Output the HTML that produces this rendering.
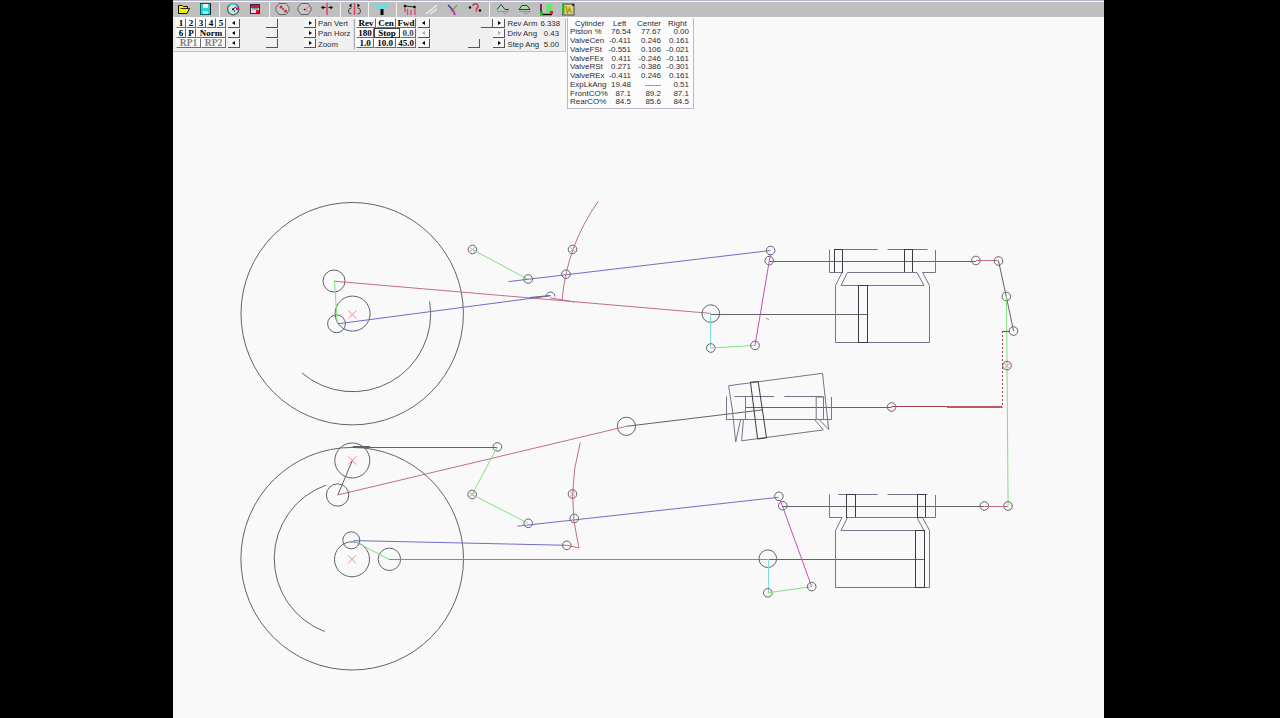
<!DOCTYPE html>
<html><head><meta charset="utf-8">
<style>
*{margin:0;padding:0;box-sizing:border-box}
html,body{width:1280px;height:718px;overflow:hidden;background:#000}
body{position:relative;font-family:"Liberation Sans",sans-serif}
#win{position:absolute;left:173px;top:0;width:931px;height:718px;background:#f9f9fa}
#tb{position:absolute;left:173px;top:0;width:931px;height:18px;background:#fafaf0}
#tb0{position:absolute;left:173px;top:0;width:931px;height:1px;background:#b4b4cc}
#tbg{position:absolute;left:173px;top:2px;width:931px;height:15px;background:#bfbfc0}
.sep{position:absolute;top:2px;width:1px;height:15px;background:#f4f4f0}
.ic{position:absolute;top:2px;width:16px;height:15px}
.btn{position:absolute;height:10px;font-family:"Liberation Serif",serif;font-weight:bold;font-size:9px;line-height:9px;text-align:center;color:#000;background:#fbfbfb;border-top:1px solid #fff;border-left:1px solid #fff;border-right:1px solid #6a6a6a;border-bottom:1px solid #6a6a6a}
.btn.dis{color:#808080;font-size:9.5px}
.arr{position:absolute;width:12px;height:9px;border-right:1px solid #555;border-bottom:1px solid #555;background:#f6f6f6}
.arr:after{content:"";position:absolute;top:2px;left:4px;width:0;height:0;border-top:2px solid transparent;border-bottom:2px solid transparent}
.arr.l:after{border-right:3px solid #000}
.arr.r:after{border-left:3px solid #000;left:5px}
.arr.dis:after{border-left-color:#aaa;border-right-color:#aaa}
.thumb{position:absolute;width:12px;height:9px;border-right:1px solid #555;border-bottom:1px solid #555;background:#f0f0f0}
.lbl{position:absolute;font-size:7.8px;line-height:9px;color:#2c2c30;white-space:nowrap}
#tbl{position:absolute;left:567px;top:18px;width:127px;height:91px;background:#fcfcfc;border-left:1px solid #b8b8c8;border-right:1px solid #b8b8c8;border-bottom:1px solid #b8b8c8}
.tr{position:absolute;left:0;width:125px;height:9px;font-size:8px;line-height:9px;color:#2c2c34;white-space:nowrap}
.tr span{position:absolute;top:0}
svg{position:absolute;left:0;top:0}
.d{fill:none;stroke:#62626e;stroke-width:1}
.dk{fill:none;stroke:#3c3c44;stroke-width:1}
.r{fill:none;stroke:#c07080;stroke-width:1}
.rd{fill:none;stroke:#a04050;stroke-width:1}
.rx{fill:none;stroke:#e890a0;stroke-width:1}
.b{fill:none;stroke:#6e6ec8;stroke-width:1}
.g{fill:none;stroke:#80e080;stroke-width:1}
.c{fill:none;stroke:#80e0e0;stroke-width:1}
.cy{fill:none;stroke:#74748a;stroke-width:1}
.rt{fill:none;stroke:#c05868;stroke-width:2}
.m{fill:none;stroke:#c050c0;stroke-width:1}
</style></head><body>
<div id="win"></div>
<div id="tb"></div>
<div id="tb0"></div>
<div id="tbg"></div>
<div class="sep" style="left:219px"></div>
<div class="sep" style="left:269px"></div>
<div class="sep" style="left:340px"></div>
<div class="sep" style="left:368px"></div>
<div class="sep" style="left:396px"></div>
<div class="sep" style="left:489px"></div>

<svg width="1280" height="18" viewBox="0 0 1280 18" style="position:absolute;left:0;top:0">
<!-- folder -->
<path d="M178.5,5.5 h4 l1,1 h4 v2 h2 l-2.5,5 h-8.5 z" fill="#f0f000" stroke="#101000" stroke-width="1"/>
<path d="M180.5,8.5 h9" stroke="#303000" stroke-width="1"/>
<!-- floppy -->
<rect x="200.5" y="3.5" width="10" height="11" fill="#20d8d8" stroke="#106060"/>
<rect x="203" y="4" width="5" height="4" fill="#f0f0f0"/>
<rect x="203" y="11" width="5" height="3" fill="#a0f0f0"/>
<line x1="210.5" y1="4" x2="210.5" y2="14" stroke="#000"/>
<!-- circle icon -->
<circle cx="233.2" cy="9.2" r="5.6" fill="#c8e8e0" stroke="#406058" stroke-width="1.2"/>
<path d="M230,5 a5,5 0 0 1 6,0" stroke="#40d0b0" fill="none" stroke-width="1.5"/>
<circle cx="233" cy="9.3" r="1" fill="#000"/>
<path d="M233,9.3 l3,-2.5" stroke="#302020"/>
<rect x="236" y="7.5" width="3" height="2.5" fill="#d010a0"/>
<circle cx="234.5" cy="11" r="0.8" fill="#104010"/>
<!-- printer/red floppy -->
<rect x="250.5" y="4.5" width="9" height="9" fill="#f0d8e8" stroke="#402838"/>
<rect x="251" y="5" width="8" height="3" fill="#c02040"/>
<rect x="252" y="8" width="6" height="1.5" fill="#60a0b0"/>
<rect x="256" y="10" width="3" height="3" fill="#e01030"/>
<!-- octagon with red dots -->
<path d="M279,3.5 h7 l3,4 v3 l-3,4 h-7 l-3,-4 v-3 z" fill="#c8c8c0" stroke="#606068"/>
<circle cx="281" cy="7" r="1.5" fill="#e02040"/>
<circle cx="285.5" cy="11" r="1.5" fill="#e02040"/>
<circle cx="283" cy="9" r="0.8" fill="#000"/>
<!-- octagon with lines -->
<path d="M301,3.5 h7 l3,4 v3 l-3,4 h-7 l-3,-4 v-3 z" fill="#c8c8c0" stroke="#606068"/>
<path d="M304.5,9.5 l5,-3 M304.5,9.5 l5,3" stroke="#e070a0"/>
<circle cx="304.5" cy="9.5" r="0.8" fill="#000"/>
<!-- red vertical with arrows -->
<line x1="327" y1="3" x2="327" y2="15" stroke="#e04060" stroke-width="1.5"/>
<path d="M321,7.5 l2.5,-2 v4 z M333,7.5 l-2.5,-2 v4 z" fill="#000"/>
<line x1="322" y1="7.5" x2="325.5" y2="7.5" stroke="#000"/><line x1="328.5" y1="7.5" x2="332" y2="7.5" stroke="#000"/>
<!-- icon10 -->
<line x1="354.5" y1="3" x2="354.5" y2="15" stroke="#e04060" stroke-width="1.5"/>
<path d="M349,5.5 l2.5,-2 v4 z M360,5.5 l-2.5,-2 v4 z" fill="#000"/>
<path d="M351.5,8 a3,3 0 1 0 0,6 M357.5,8 a3,3 0 1 1 0,6" fill="none" stroke="#404040"/>
<!-- cyan Y -->
<path d="M376,4 l5.5,5 l5.5,-5" fill="none" stroke="#40f0f0" stroke-width="2.5"/>
<rect x="380.5" y="9" width="3" height="6" fill="#000"/>
<!-- linkage -->
<circle cx="405" cy="6" r="1.3" fill="#000"/><circle cx="414.5" cy="7" r="1.3" fill="#000"/>
<line x1="405" y1="6" x2="414.5" y2="7" stroke="#203020"/>
<path d="M405,7 v5 M407.5,9 v6 M411,10 v5 M415,8 v7" stroke="#e05070" stroke-width="1.5"/>
<!-- disabled slash -->
<path d="M426,14 l11,-9 M430,14 l7,-5" stroke="#f0f0f0" stroke-width="1.2"/>
<!-- magenta X -->
<path d="M448,5 l5,5" stroke="#303080" stroke-width="1.2"/>
<path d="M457,5 l-4,5" stroke="#60a040" stroke-width="1.2"/>
<path d="M451,9 l3,3 M453,10 l2,5" stroke="#d030c0" stroke-width="2"/>
<!-- red ? -->
<path d="M473,6 a2.5,2.5 0 1 1 3.5,2.5 v3" fill="none" stroke="#e03050" stroke-width="1.5"/>
<circle cx="470" cy="7.5" r="1.2" fill="#000"/><circle cx="480" cy="10.5" r="1.2" fill="#000"/>
<!-- wave 1 -->
<path d="M497,9.5 l4,-5 l4,5 h4" fill="#a0e0a0" stroke="#303070"/>
<path d="M497,11.5 h12 M503,11.5 l2,2.5 l2,-2.5" fill="none" stroke="#c080a0"/>
<!-- wave 2 -->
<path d="M519,9.5 l3,-4 h5 l3,4 z" fill="#a0e0a0" stroke="#303070"/>
<path d="M519,11.5 h12 M523,11.5 l2,2 h3 l2,-2" fill="none" stroke="#c08090"/>
<!-- box red/green -->
<rect x="540.5" y="4" width="12" height="11" fill="#d8b0c8"/>
<rect x="546" y="4" width="6.5" height="9" fill="#70e070"/>
<path d="M541,4 v10.5 h11" fill="none" stroke="#100008" stroke-width="1.3"/>
<rect x="540" y="11.5" width="3" height="4" fill="#30b030"/>
<rect x="550" y="11" width="3" height="3" fill="#e02020"/>
<!-- box green/yellow -->
<rect x="562.5" y="4" width="11.5" height="11" fill="#d8d870" stroke="#404070" stroke-width="1"/>
<rect x="562" y="4" width="2.5" height="10" fill="#30b030"/>
<path d="M566,6 l1.5,7 l2,-5 l2,5" fill="none" stroke="#c08010" stroke-width="1.2"/>
<circle cx="573" cy="5" r="1" fill="#101010"/>
</svg>
<div style="position:absolute;left:173px;top:18px;width:393px;height:33px;background:#f0f0f1"></div>
<div class="btn " style="left:176px;top:18px;width:10px;">1</div>
<div class="btn " style="left:186px;top:18px;width:10px;">2</div>
<div class="btn " style="left:196px;top:18px;width:10px;">3</div>
<div class="btn " style="left:206px;top:18px;width:10px;">4</div>
<div class="btn " style="left:216px;top:18px;width:10px;">5</div>
<div class="btn " style="left:176px;top:28px;width:10px;">6</div>
<div class="btn " style="left:186px;top:28px;width:10px;">P</div>
<div class="btn " style="left:196px;top:28px;width:30px;">Norm</div>
<div class="btn dis" style="left:176px;top:38px;width:25px;">RP1</div>
<div class="btn dis" style="left:201px;top:38px;width:25px;">RP2</div>
<div class="arr l " style="left:228px;top:19px"></div>
<div class="thumb" style="left:266px;top:19px"></div>
<div class="arr r " style="left:304px;top:19px"></div>
<div class="arr l " style="left:228px;top:29px"></div>
<div class="thumb" style="left:266px;top:29px"></div>
<div class="arr r " style="left:304px;top:29px"></div>
<div class="arr l " style="left:228px;top:39px"></div>
<div class="thumb" style="left:266px;top:39px"></div>
<div class="arr r " style="left:304px;top:39px"></div>
<div class="lbl" style="left:318px;top:19px;">Pan Vert</div>
<div class="lbl" style="left:318px;top:29.2px;">Pan Horz</div>
<div class="lbl" style="left:318px;top:39.5px;">Zoom</div>
<div style="position:absolute;left:353px;top:19px;width:1px;height:31px;background:#e0e0e8"></div>
<div class="btn " style="left:356px;top:18px;width:20px;">Rev</div>
<div class="btn " style="left:376px;top:18px;width:20px;">Cen</div>
<div class="btn " style="left:396px;top:18px;width:20px;">Fwd</div>
<div class="btn " style="left:356px;top:28px;width:18px;">180</div>
<div class="btn " style="left:374px;top:28px;width:26px;border:1px solid #404040">Stop</div>
<div class="btn " style="left:400px;top:28px;width:16px;color:#444">0.0</div>
<div class="btn " style="left:356px;top:38px;width:18px;">1.0</div>
<div class="btn " style="left:374px;top:38px;width:22px;">10.0</div>
<div class="btn " style="left:396px;top:38px;width:20px;">45.0</div>
<div style="position:absolute;left:354px;top:19px;width:1px;height:30px;background:#a8a8b0"></div>
<div class="arr l " style="left:418px;top:19px"></div>
<div class="arr l dis" style="left:418px;top:29px"></div>
<div class="arr l " style="left:418px;top:39px"></div>
<div class="thumb" style="left:481px;top:19px"></div>
<div class="arr r " style="left:493px;top:19px"></div>
<div class="arr r dis" style="left:493px;top:29px"></div>
<div class="thumb" style="left:468px;top:39px"></div>
<div class="arr r " style="left:493px;top:39px"></div>
<div class="lbl" style="left:507.5px;top:19px;">Rev Arm</div>
<div class="lbl" style="left:507.5px;top:29.2px;">Driv Ang</div>
<div class="lbl" style="left:507.5px;top:39.5px;">Step Ang</div>
<div class="lbl" style="left:400px;top:19px;width:160px;text-align:right">6.338</div>
<div class="lbl" style="left:400px;top:29.2px;width:159px;text-align:right">0.43</div>
<div class="lbl" style="left:400px;top:39.5px;width:159px;text-align:right">5.00</div>
<div style="position:absolute;left:565px;top:19px;width:1px;height:32px;background:#b8b8c0"></div>
<div style="position:absolute;left:173px;top:51px;width:393px;height:1px;background:#c4c4b0"></div>
<div id="tbl">
<div class="tr" style="top:0.5px"><span style="left:7px">Cylinder</span><span style="left:45px">Left</span><span style="left:69px">Center</span><span style="left:100px">Right</span></div>
<div class="tr" style="top:9.25px"><span style="left:2px">Piston %</span><span style="right:62px">76.54</span><span style="right:32px">77.67</span><span style="right:4px">0.00</span></div>
<div class="tr" style="top:18.0px"><span style="left:2px">ValveCen</span><span style="right:62px">-0.411</span><span style="right:32px">0.246</span><span style="right:4px">0.161</span></div>
<div class="tr" style="top:26.75px"><span style="left:2px">ValveFSt</span><span style="right:62px">-0.551</span><span style="right:32px">0.106</span><span style="right:4px">-0.021</span></div>
<div class="tr" style="top:35.5px"><span style="left:2px">ValveFEx</span><span style="right:62px">0.411</span><span style="right:32px">-0.246</span><span style="right:4px">-0.161</span></div>
<div class="tr" style="top:44.25px"><span style="left:2px">ValveRSt</span><span style="right:62px">0.271</span><span style="right:32px">-0.386</span><span style="right:4px">-0.301</span></div>
<div class="tr" style="top:53.0px"><span style="left:2px">ValveREx</span><span style="right:62px">-0.411</span><span style="right:32px">0.246</span><span style="right:4px">0.161</span></div>
<div class="tr" style="top:61.75px"><span style="left:2px">ExpLkAng</span><span style="right:62px">19.48</span><span style="right:32px">------</span><span style="right:4px">0.51</span></div>
<div class="tr" style="top:70.5px"><span style="left:2px">FrontCO%</span><span style="right:62px">87.1</span><span style="right:32px">89.2</span><span style="right:4px">87.1</span></div>
<div class="tr" style="top:79.25px"><span style="left:2px">RearCO%</span><span style="right:62px">84.5</span><span style="right:32px">85.6</span><span style="right:4px">84.5</span></div>
</div>
<svg width="1280" height="718" viewBox="0 0 1280 718">
<circle cx="352.2" cy="313.7" r="111.2" class="d"/>
<path d="M429.7,301.4 A78,78 0 0 1 302,373" class="d"/>
<circle cx="352.6" cy="313.6" r="17.5" class="d"/>
<line x1="348.3" y1="310.6" x2="356.3" y2="318.6" class="rx"/>
<line x1="348.3" y1="318.6" x2="356.3" y2="310.6" class="rx"/>
<circle cx="334" cy="281" r="11" class="d"/>
<circle cx="336.5" cy="323.8" r="8.9" class="d"/>
<line x1="334" y1="281.2" x2="710.8" y2="313.4" class="r"/>
<line x1="334.5" y1="281.7" x2="337.3" y2="323.5" class="g"/>
<line x1="337.9" y1="323.8" x2="550.4" y2="295.8" class="b"/>
<circle cx="472.4" cy="249.5" r="4.3" class="d"/>
<line x1="469.4" y1="246.5" x2="475.4" y2="252.5" class="rx"/>
<line x1="469.4" y1="252.5" x2="475.4" y2="246.5" class="rx"/>
<line x1="472.4" y1="249.5" x2="528" y2="279.3" class="g"/>
<line x1="508.5" y1="281.6" x2="770.6" y2="250.5" class="b"/>
<circle cx="528.2" cy="279" r="4.3" class="d"/>
<circle cx="566" cy="274.2" r="4.3" class="d"/>
<path d="M598.3,201.2 A201.6,201.6 0 0 0 562,300.9" class="r"/>
<circle cx="572.5" cy="249.4" r="4.3" class="d"/>
<line x1="569.5" y1="246.4" x2="575.5" y2="252.4" class="rx"/>
<line x1="569.5" y1="252.4" x2="575.5" y2="246.4" class="rx"/>
<path d="M546,296.5 A4.5,4.5 0 0 1 555,296.5" class="d"/>
<line x1="530" y1="297.5" x2="550.4" y2="295.5" class="d"/>
<line x1="550" y1="297.8" x2="575" y2="302" class="r"/>
<circle cx="770.6" cy="250.5" r="4.3" class="d"/>
<circle cx="769.2" cy="260.6" r="4.3" class="d"/>
<line x1="769.2" y1="261.5" x2="976" y2="261.5" class="d"/>
<circle cx="710.8" cy="313.6" r="8.8" class="d"/>
<line x1="710.8" y1="314.5" x2="867.5" y2="314.5" class="d"/>
<line x1="710.5" y1="314" x2="710.5" y2="348" class="c"/>
<circle cx="710.8" cy="348" r="4.3" class="d"/>
<line x1="710.8" y1="348" x2="755" y2="345.4" class="g"/>
<circle cx="755" cy="345.4" r="4.3" class="d"/>
<line x1="755" y1="345.4" x2="770.4" y2="254.4" class="m"/>
<line x1="766" y1="318" x2="769" y2="320" class="r"/>
<line x1="829.5" y1="249.5" x2="829.5" y2="272.5" class="cy"/>
<line x1="935.5" y1="250" x2="935.5" y2="272.5" class="cy"/>
<line x1="834.5" y1="249.5" x2="877.5" y2="249.5" class="cy"/>
<line x1="887.5" y1="249.5" x2="927.5" y2="249.5" class="cy"/>
<rect x="834.5" y="249.5" width="8.0" height="23" class="dk"/>
<rect x="904.5" y="249.5" width="8.0" height="23" class="dk"/>
<line x1="829.5" y1="272.5" x2="842" y2="272.5" class="cy"/>
<polyline points="842,272.5 835.5,285.5 835.5,342.5 929.5,342.5 929.5,285.5 922.5,272.5 935.5,272.5" class="cy"/>
<polyline points="847.5,272.5 841,285.5 924,285.5 917,272.5 847.5,272.5" class="cy"/>
<rect x="858.5" y="285.5" width="9.0" height="57" class="dk"/>
<circle cx="975.9" cy="260.5" r="4.3" class="d"/>
<line x1="976" y1="260.5" x2="998.5" y2="260.5" class="r"/>
<circle cx="998.5" cy="261" r="4.3" class="d"/>
<line x1="998.5" y1="261" x2="1006.3" y2="296.5" class="d"/>
<circle cx="1006.3" cy="296.5" r="4.3" class="d"/>
<line x1="1006.3" y1="296.5" x2="1013.5" y2="331" class="d"/>
<circle cx="1013.5" cy="331" r="4.3" class="d"/>
<line x1="1006.5" y1="296.5" x2="1008.1" y2="506" class="g"/>
<line x1="1002.5" y1="331" x2="1002.5" y2="407" class="rd" stroke-dasharray="2,2"/>
<line x1="1002.5" y1="331.5" x2="1010" y2="331.5" class="rd"/>
<circle cx="1007" cy="365.6" r="4.3" class="d"/>
<line x1="1004" y1="362.6" x2="1010" y2="368.6" class="rx"/>
<line x1="1004" y1="368.6" x2="1010" y2="362.6" class="rx"/>
<line x1="947" y1="407" x2="1002.5" y2="407" class="rt" style="stroke-width:2px"/>
<line x1="891.6" y1="406.5" x2="947" y2="406.5" class="rd"/>
<circle cx="891.6" cy="407" r="4.3" class="d"/>
<line x1="745.5" y1="407.5" x2="891.6" y2="407.5" class="d"/>
<circle cx="984.3" cy="506" r="4.3" class="d"/>
<circle cx="1008" cy="506" r="4.3" class="d"/>
<line x1="984.3" y1="506.5" x2="1008" y2="506.5" class="r"/>
<line x1="782.8" y1="506.5" x2="984.3" y2="506.5" class="d"/>
<line x1="626.4" y1="426.3" x2="762.4" y2="409.9" class="d"/>
<circle cx="626.4" cy="426.3" r="9.1" class="d"/>
<line x1="337.6" y1="495" x2="626.4" y2="426.3" class="r"/>
<line x1="734.5" y1="396.5" x2="774.2" y2="396.5" class="cy"/>
<line x1="784.3" y1="396.5" x2="823.3" y2="396.5" class="cy"/>
<line x1="726.2" y1="419.5" x2="831.6" y2="419.5" class="cy"/>
<line x1="726.5" y1="396.4" x2="726.5" y2="419.5" class="cy"/>
<line x1="831.5" y1="397" x2="831.5" y2="419.5" class="cy"/>
<line x1="745.5" y1="397" x2="745.5" y2="419.5" class="cy"/>
<rect x="816.2" y="397" width="7.3" height="22.5" class="cy"/>
<polyline points="728.6,385.7 822.5,373.3 828.7,429.5" class="cy"/>
<polyline points="741.6,440.8 823.3,429.9" class="cy"/>
<line x1="728.6" y1="385.7" x2="733" y2="414" class="cy"/>
<polyline points="732.8,414.1 735.7,442 740.5,420" class="cy"/>
<line x1="743.4" y1="420" x2="741.6" y2="440.8" class="cy"/>
<line x1="814.5" y1="419.5" x2="823.3" y2="429.9" class="cy"/>
<line x1="819.2" y1="419.5" x2="828.7" y2="429.5" class="cy"/>
<polyline points="750.5,382.2 758.2,381.6 766.5,437.8 757.6,439 750.5,382.2" class="dk"/>
<circle cx="352.2" cy="558.7" r="111.3" class="d"/>
<path d="M326,485.1 A78,78 0 0 0 324.6,631.5" class="d"/>
<circle cx="352" cy="559.3" r="17.5" class="d"/>
<line x1="348" y1="555.3" x2="356" y2="563.3" class="rx"/>
<line x1="348" y1="563.3" x2="356" y2="555.3" class="rx"/>
<circle cx="351.3" cy="540.3" r="8.5" class="d"/>
<circle cx="389.4" cy="559.3" r="11.2" class="d"/>
<line x1="353.7" y1="540.6" x2="566.8" y2="545.3" class="b"/>
<line x1="353" y1="540.6" x2="389" y2="559.3" class="g"/>
<line x1="389" y1="559.5" x2="767.8" y2="559.5" class="r"/>
<circle cx="352.3" cy="460.5" r="17.5" class="d"/>
<line x1="348.3" y1="456.5" x2="356.3" y2="464.5" class="rx"/>
<line x1="348.3" y1="464.5" x2="356.3" y2="456.5" class="rx"/>
<circle cx="337.6" cy="495" r="11.2" class="d"/>
<line x1="338" y1="494.6" x2="352.3" y2="460.5" class="d"/>
<line x1="352.7" y1="447.5" x2="497.4" y2="447.5" class="d"/>
<line x1="352.7" y1="447" x2="370" y2="447" class="d" style="stroke-width:2px"/>
<circle cx="497.4" cy="446.9" r="4.3" class="d"/>
<line x1="497.4" y1="446.9" x2="472.1" y2="494.5" class="g"/>
<circle cx="472.1" cy="494.5" r="4.3" class="d"/>
<line x1="469.1" y1="491.5" x2="475.1" y2="497.5" class="rx"/>
<line x1="469.1" y1="497.5" x2="475.1" y2="491.5" class="rx"/>
<line x1="472.1" y1="494.5" x2="528.2" y2="523.3" class="g"/>
<circle cx="528.2" cy="523.3" r="4.3" class="d"/>
<line x1="517.5" y1="526.2" x2="778.5" y2="497.3" class="b"/>
<circle cx="574.2" cy="518.4" r="4.3" class="d"/>
<path d="M580.3,442.4 A204,204 0 0 0 578.9,547.7" class="r"/>
<circle cx="572.5" cy="494" r="4.3" class="d"/>
<line x1="569.5" y1="491" x2="575.5" y2="497" class="rx"/>
<line x1="569.5" y1="497" x2="575.5" y2="491" class="rx"/>
<circle cx="566.8" cy="545.3" r="4.3" class="d"/>
<line x1="567" y1="545.3" x2="579" y2="548" class="r"/>
<circle cx="778.9" cy="496.3" r="4.3" class="d"/>
<circle cx="782.8" cy="505.7" r="4.3" class="d"/>
<circle cx="767.8" cy="558.7" r="8.8" class="d"/>
<line x1="767.8" y1="559.5" x2="924.2" y2="559.5" class="d"/>
<line x1="768.5" y1="559" x2="768.5" y2="592.8" class="c"/>
<circle cx="767.8" cy="592.8" r="4.3" class="d"/>
<line x1="767.8" y1="592.8" x2="811.7" y2="586.6" class="g"/>
<circle cx="811.7" cy="586.6" r="4.3" class="d"/>
<line x1="811.7" y1="586.6" x2="780.3" y2="500.2" class="m"/>
<line x1="829.5" y1="494.5" x2="829.5" y2="517.5" class="cy"/>
<line x1="935.5" y1="495" x2="935.5" y2="517.5" class="cy"/>
<line x1="838" y1="494.5" x2="877.5" y2="494.5" class="cy"/>
<line x1="887.5" y1="494.5" x2="927.5" y2="494.5" class="cy"/>
<rect x="846.5" y="494.5" width="9.0" height="23" class="dk"/>
<rect x="917.5" y="494.5" width="8.0" height="23" class="dk"/>
<line x1="829.5" y1="517.5" x2="842" y2="517.5" class="cy"/>
<polyline points="842,517.5 835.5,530.5 835.5,587.5 929.5,587.5 929.5,530.5 922.5,517.5 935.5,517.5" class="cy"/>
<polyline points="847.5,517.5 841,530.5 924,530.5 917,517.5 847.5,517.5" class="cy"/>
<rect x="915.5" y="530.5" width="9.0" height="57" class="dk"/>
</svg>
</body></html>
